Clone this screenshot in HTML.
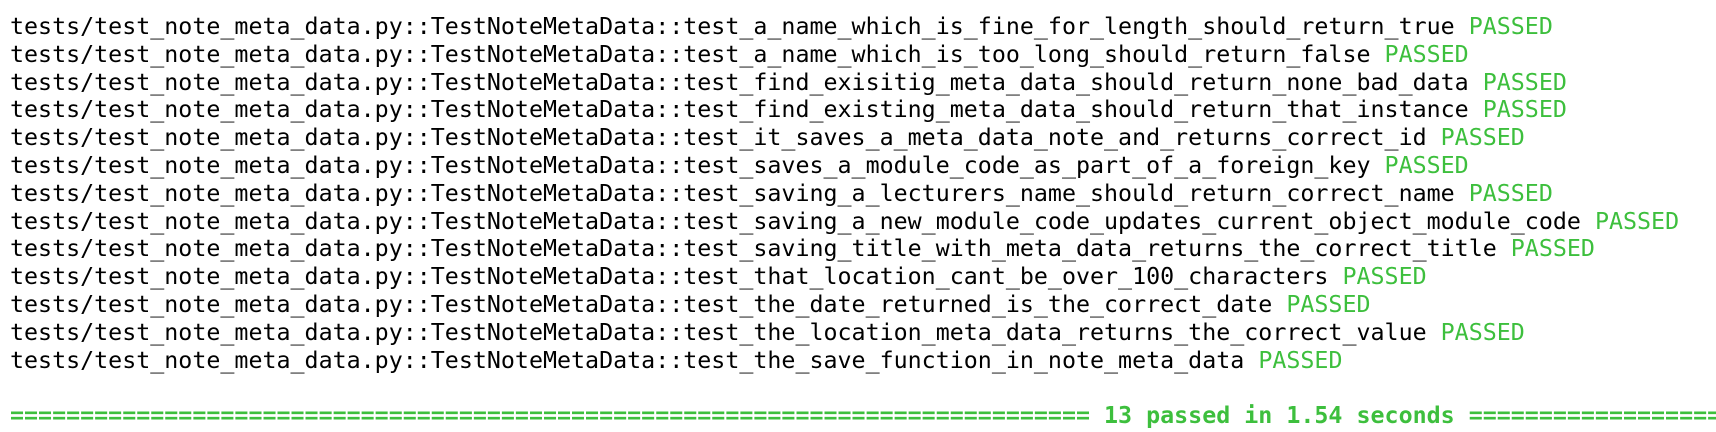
<!DOCTYPE html>
<html><head><meta charset="utf-8"><style>
html,body{margin:0;padding:0;background:#fff;width:1716px;height:432px;overflow:hidden}
pre{margin:0;padding:13px 0 0 10px;font-family:"DejaVu Sans Mono","Liberation Mono",monospace;font-size:23.3px;line-height:27.8px;color:#000;white-space:pre}
.g{color:#3dbf3d}
.b{font-weight:bold}
</style></head><body><pre>tests/test_note_meta_data.py::TestNoteMetaData::test_a_name_which_is_fine_for_length_should_return_true <span class="g">PASSED</span>
tests/test_note_meta_data.py::TestNoteMetaData::test_a_name_which_is_too_long_should_return_false <span class="g">PASSED</span>
tests/test_note_meta_data.py::TestNoteMetaData::test_find_exisitig_meta_data_should_return_none_bad_data <span class="g">PASSED</span>
tests/test_note_meta_data.py::TestNoteMetaData::test_find_existing_meta_data_should_return_that_instance <span class="g">PASSED</span>
tests/test_note_meta_data.py::TestNoteMetaData::test_it_saves_a_meta_data_note_and_returns_correct_id <span class="g">PASSED</span>
tests/test_note_meta_data.py::TestNoteMetaData::test_saves_a_module_code_as_part_of_a_foreign_key <span class="g">PASSED</span>
tests/test_note_meta_data.py::TestNoteMetaData::test_saving_a_lecturers_name_should_return_correct_name <span class="g">PASSED</span>
tests/test_note_meta_data.py::TestNoteMetaData::test_saving_a_new_module_code_updates_current_object_module_code <span class="g">PASSED</span>
tests/test_note_meta_data.py::TestNoteMetaData::test_saving_title_with_meta_data_returns_the_correct_title <span class="g">PASSED</span>
tests/test_note_meta_data.py::TestNoteMetaData::test_that_location_cant_be_over_100_characters <span class="g">PASSED</span>
tests/test_note_meta_data.py::TestNoteMetaData::test_the_date_returned_is_the_correct_date <span class="g">PASSED</span>
tests/test_note_meta_data.py::TestNoteMetaData::test_the_location_meta_data_returns_the_correct_value <span class="g">PASSED</span>
tests/test_note_meta_data.py::TestNoteMetaData::test_the_save_function_in_note_meta_data <span class="g">PASSED</span>

<span class="g b">============================================================================= 13 passed in 1.54 seconds ======================================</span></pre></body></html>
